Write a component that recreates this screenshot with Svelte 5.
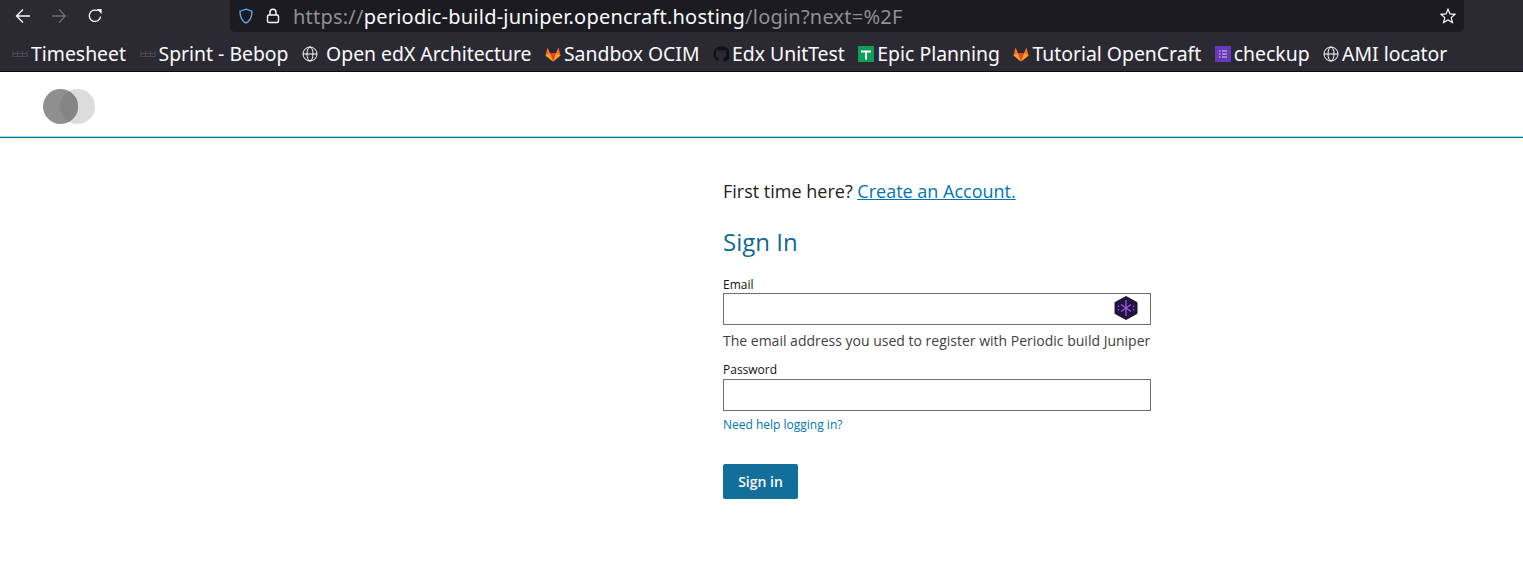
<script>
  const bookmarks = [
    { label: 'Timesheet', icon: 'sheet' },
    { label: 'Sprint - Bebop', icon: 'sheet' },
    { label: ' Open edX Architecture', icon: 'globe' },
    { label: 'Sandbox OCIM', icon: 'fox' },
    { label: 'Edx UnitTest', icon: 'github' },
    { label: 'Epic Planning', icon: 'plus' },
    { label: 'Tutorial OpenCraft', icon: 'fox' },
    { label: 'checkup', icon: 'form' },
    { label: 'AMI locator', icon: 'globe' }
  ];
</script>

<div class="browser">
  <div class="toolbar">
    <div class="nav">
      <svg width="16" height="16" viewBox="0 0 16 16" fill="none" stroke="#fbfbfe" stroke-width="1.3"><path d="M15 8H1.500M8 1.500 1.500 8 8 14.500" /></svg>
      <svg width="16" height="16" viewBox="0 0 16 16" fill="none" stroke="#6b6b72" stroke-width="1.3"><path d="M1 8h13.500M8 1.500 14.500 8 8 14.500" /></svg>
      <svg width="16" height="16" viewBox="0 0 16 16" fill="none" stroke="#fbfbfe" stroke-width="1.3"><path d="M13.600 8.600A5.700 5.700 0 1 1 10.600 2.700" /><path d="M9.600 1h5v5z" fill="#fbfbfe" stroke="none" /></svg>
    </div>
    <div class="urlbar">
      <svg class="shield" width="16" height="16" viewBox="0 0 16 16" fill="none" stroke="#59a5e6" stroke-width="1.4"><path d="M8 1.200 14 3.200C14 9 12 13 8 15 4 13 2 9 2 3.200z" /></svg>
      <svg class="lock" width="14" height="16" viewBox="0 0 14 16" fill="none" stroke="#fbfbfe" stroke-width="1.4"><rect x="1.500" y="7" width="11" height="7.500" rx="1.500" /><path d="M4 7V4.200a3 3 0 0 1 6 0V7" /></svg>
      <span class="url"><span class="dim">https://</span>periodic-build-juniper.opencraft.hosting<span class="dim">/login?next=%2F</span></span>
      <svg class="star" width="16" height="16" viewBox="0 0 16 16" fill="none" stroke="#fbfbfe" stroke-width="1.2"><path d="M8 1.200 10 5.900 15 6.300 11.200 9.600 12.400 14.600 8 12 3.600 14.600 4.800 9.600 1 6.300 6 5.900z" /></svg>
    </div>
  </div>
  <div class="bookmarks">
    {#each bookmarks as b}
      <span class="bookmark">
        {#if b.icon === 'sheet'}
          <svg width="16" height="16" viewBox="0 0 16 16" fill="none" stroke="#4a4a50"><path d="M1 5v6M5.500 5v6M10.500 5v6M15 5v6M1 7.500h14M1 10.500h14" /></svg>
        {:else if b.icon === 'globe'}
          <svg width="16" height="16" viewBox="0 0 16 16" fill="none" stroke="#fbfbfe" stroke-width="1"><circle cx="8" cy="8" r="7" /><ellipse cx="8" cy="8" rx="3" ry="7" /><path d="M1 8h14" /></svg>
        {:else if b.icon === 'fox'}
          <svg width="16" height="16" viewBox="0 0 16 16">
            <path d="M8 15.500 .5 9.500 2.500 1.500 5 7h6l2.500-5.500 2 8z" fill="#fc6d26" />
            <path d="M.5 9.500 5 7 8 15.500zM15.500 9.500 11 7 8 15.500z" fill="#fca326" />
            <path d="M8 15.500 5 7h6z" fill="#e24329" />
          </svg>
        {:else if b.icon === 'github'}
          <svg width="16" height="16" viewBox="0 0 16 16"><path d="M8 .500a7.600 7.600 0 0 0-2.400 14.800v-3C3.500 12.700 3.200 11.300 2.500 10.800c1 0 1.500.8 2 1.300.6.400 1.100.2 1.200-.2-1.800-.4-3-1.400-3-3.800 0-1 .3-1.700.8-2.300-.2-.6-.2-1.300.1-2 .8 0 1.500.4 2.200.9a7 7 0 0 1 4.400 0c.7-.5 1.400-.9 2.200-.9.300.7.300 1.400.1 2 .5.600.8 1.300.8 2.300 0 2.400-1.200 3.400-3 3.800.3.400.4.800.4 1.300v3.100A7.600 7.600 0 0 0 8 .500z" fill="#111114" /></svg>
        {:else if b.icon === 'plus'}
          <svg width="16" height="16" viewBox="0 0 16 16"><rect width="16" height="16" fill="#0f9d58" /><path d="M3 4.500h10v2h-4v7h-2v-7h-4z" fill="#fff" /></svg>
        {:else}
          <svg width="16" height="16" viewBox="0 0 16 16"><rect width="16" height="16" fill="#673ab7" /><path d="M4 5h1.500M4 8h1.500M4 11h1.500M7 5h5M7 8h5M7 11h5" stroke="#d8cdec" stroke-width="1" /></svg>
        {/if}
        <span class="label">{b.label}</span>
      </span>
    {/each}
  </div>
</div>

<header class="site-header">
  <svg class="logo" width="52" height="35" viewBox="0 0 52 35">
    <circle cx="34.500" cy="17.500" r="17.500" fill="#dcdcdc" />
    <circle cx="17.500" cy="17.500" r="17.500" fill="#8f8f8f" />
    <path d="M26 2.200a17.500 17.500 0 0 1 0 30.600 17.500 17.500 0 0 1 0-30.600z" fill="#858585" />
  </svg>
</header>

<main class="page">
  <form class="login" onsubmit={(e) => e.preventDefault()}>
    <p class="first-time">First time here? <a href="#register">Create an Account.</a></p>
    <h1>Sign In</h1>

    <label for="email">Email</label>
    <div class="field">
      <input id="email" type="email" />
      <svg class="lastpass" width="24" height="24" viewBox="0 0 24 24">
        <path d="M12 .5 23 6.500v11l-11 6-11-6v-11z" fill="#22123f" stroke="#22123f" stroke-linejoin="round" />
        <g stroke="#9a5ce6" stroke-width="1.300" fill="none">
          <path d="M12 4v16" />
          <path d="M12 12 17 8.500M12 12 17 15.500M12 12 7 8.500M12 12 7 15.500" />
          <path d="M4.500 9.500v1.500M4.500 13v1.500M19.500 9.500v1.500M19.500 13v1.500" />
        </g>
      </svg>
    </div>
    <p class="hint">The email address you used to register with Periodic build Juniper</p>

    <label class="password-label" for="password">Password</label>
    <input id="password" type="password" />
    <a class="help" href="#help">Need help logging in?</a>

    <button type="submit">Sign in</button>
  </form>
</main>

<style>
  :global(body) {
    margin: 0;
    background: #fff;
    font-family: "Open Sans", sans-serif;
  }

  .browser {
    background: #2b2a33;
    color: #fbfbfe;
    font-family: "Noto Sans", sans-serif;
    border-bottom: 1px solid #0c0c0d;
  }

  .toolbar {
    display: flex;
    align-items: center;
    height: 32px;
  }

  .nav {
    display: flex;
    gap: 20px;
    width: 230px;
    padding-left: 15px;
    box-sizing: border-box;
  }

  .urlbar {
    display: flex;
    align-items: center;
    width: 1234px;
    height: 32px;
    background: #1c1b22;
    border-radius: 0 0 5px 5px;
    box-sizing: border-box;
    padding: 0 8px;
  }

  .shield {
    margin-right: 12px;
  }

  .lock {
    margin-right: 13px;
  }

  .url {
    flex: 1;
    font-size: 20px;
    letter-spacing: 0.22px;
    white-space: nowrap;
  }

  .dim {
    color: #8f8f94;
  }

  .bookmarks {
    display: flex;
    align-items: center;
    height: 39px;
    box-sizing: border-box;
    padding: 4px 0 0 12px;
    gap: 13.5px;
    font-size: 19.4px;
  }

  .bookmark {
    display: flex;
    align-items: center;
    gap: 3px;
    white-space: nowrap;
  }

  .label {
    white-space: pre;
  }

  .site-header {
    display: flex;
    align-items: center;
    height: 66px;
    box-sizing: border-box;
    padding: 3px 0 0 43px;
    border-bottom: 1px solid #0b6f8f;
    box-shadow: inset 0 -1px 0 #9fdbe6, 0 2px 4px rgba(0, 0, 0, 0.06);
  }

  .page {
    display: flex;
    padding: 40px 0 0 723px;
  }

  .login {
    display: flex;
    flex-direction: column;
    align-items: flex-start;
    width: 428px;
    font-size: 12px;
    color: #111;
  }

  .first-time {
    margin: 0;
    font-size: 18px;
    line-height: 27px;
    color: #222;
    white-space: nowrap;
  }

  .first-time a {
    color: #0075b4;
  }

  h1 {
    margin: 19px 0 0;
    font-size: 24px;
    line-height: 36px;
    font-weight: 400;
    color: #0f6a94;
  }

  label {
    margin-top: 16px;
    line-height: 17px;
    color: #111;
  }

  .field {
    position: relative;
    width: 100%;
  }

  input {
    display: block;
    width: 100%;
    height: 32px;
    box-sizing: border-box;
    border: 1px solid #6f6f6f;
    border-radius: 0;
    background: #fff;
    box-shadow: inset 0 0 3px rgba(0, 0, 0, 0.06);
    outline: none;
  }

  .lastpass {
    position: absolute;
    top: 3px;
    right: 13px;
  }

  .hint {
    margin: 6px 0 0;
    font-size: 14px;
    line-height: 19px;
    color: #414141;
    white-space: nowrap;
  }

  .password-label {
    margin: 11px 0 1px;
  }

  .help {
    margin-top: 5px;
    line-height: 17px;
    color: #0075b4;
    text-decoration: none;
  }

  button {
    margin-top: 31px;
    width: 75px;
    height: 35px;
    padding: 0;
    border: none;
    border-radius: 2px;
    background: #126f9a;
    color: #fff;
    font: 550 14px "Open Sans", sans-serif;
  }
</style>
